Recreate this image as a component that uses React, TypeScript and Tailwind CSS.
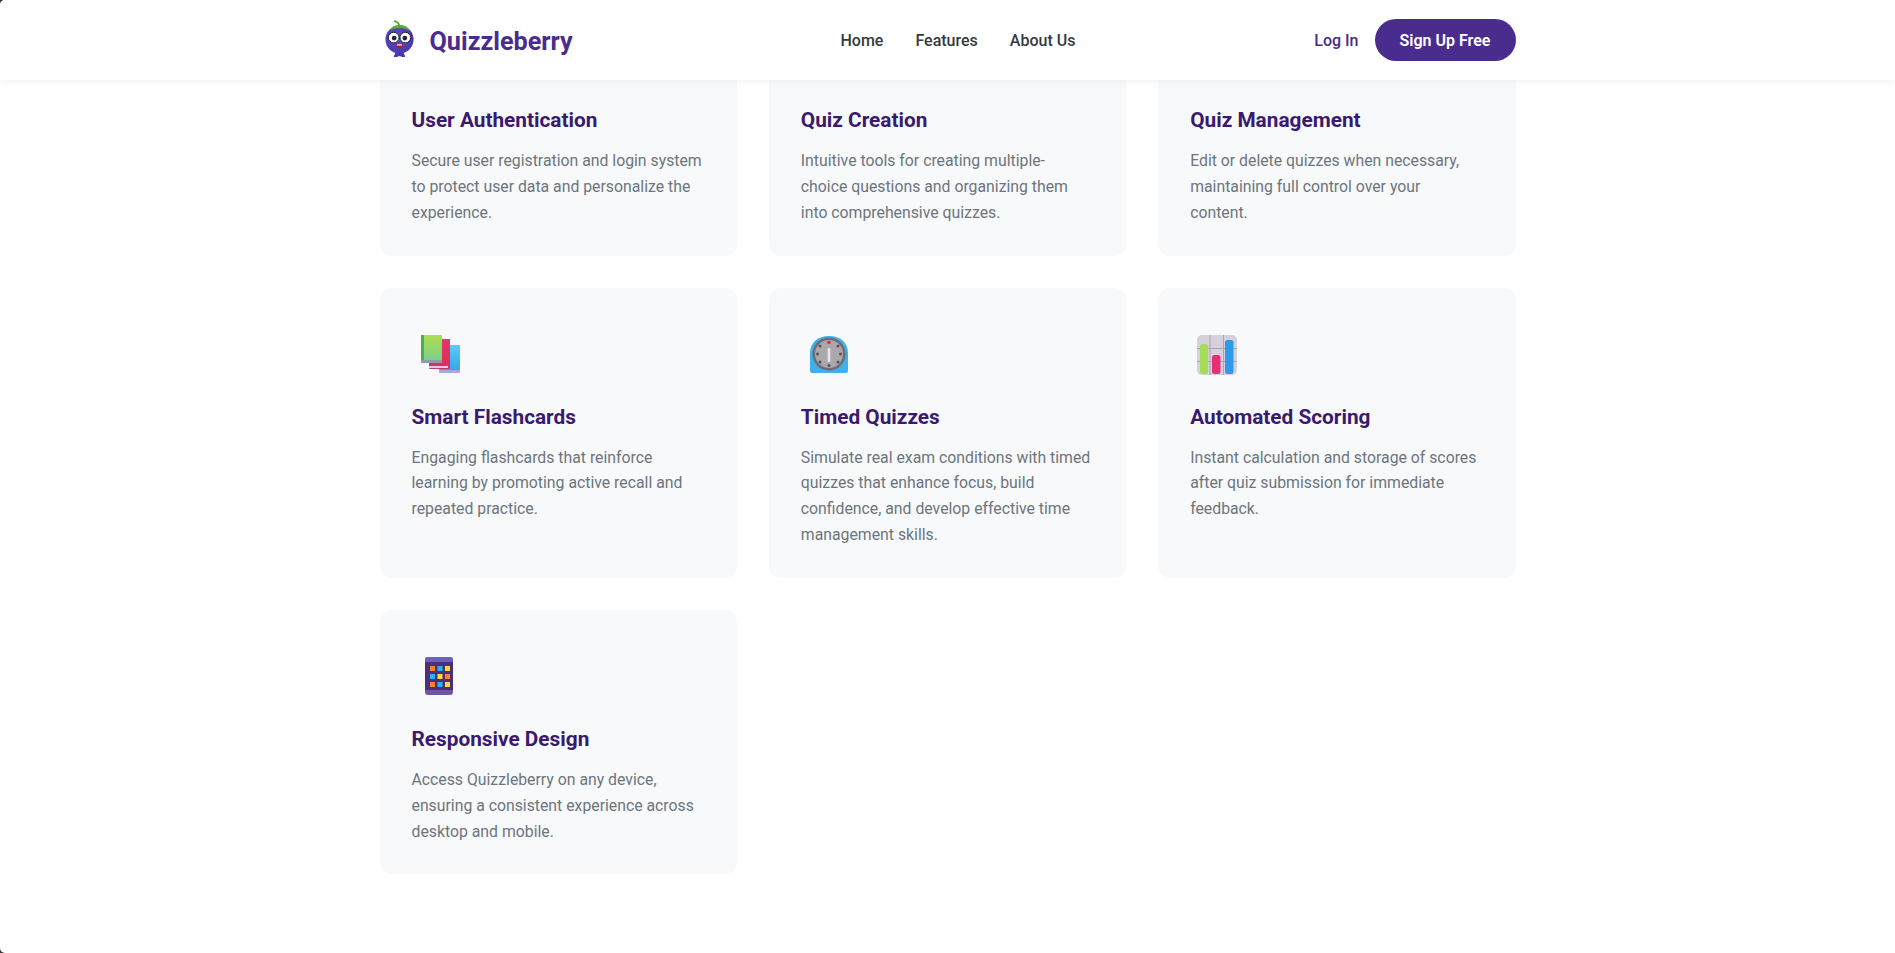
import type { ReactNode } from "react";

const sans = "font-['Roboto','Open_Sans',sans-serif]";

function BerryLogo() {
  return (
    <svg width="31" height="39" viewBox="0 0 32 40" className="shrink-0">
      <defs>
        <radialGradient id="berry" cx="0.42" cy="0.42" r="0.7">
          <stop offset="0" stopColor="#5f50c4" />
          <stop offset="1" stopColor="#4336a6" />
        </radialGradient>
      </defs>
      <path d="M12 33l-2 5h3l3-1 3 1h3l-2-5z" fill="#4538a8" />
      <circle cx="16" cy="20" r="14.5" fill="url(#berry)" />
      <path d="M5.500 11c3-5 7-6 10.500-6s8 1 10.500 6c-3-2-7-2.500-10.500-2.500S9 9 5.500 11z" fill="#5cab36" />
      <path d="M16 7c0-3-2-5-5-6" fill="none" stroke="#5cab36" strokeWidth="1.800" strokeLinecap="round" />
      <circle cx="10" cy="18" r="5.500" fill="#fff" stroke="#1d1a33" strokeWidth="1" />
      <circle cx="22" cy="18" r="5.500" fill="#fff" stroke="#1d1a33" strokeWidth="1" />
      <circle cx="10.500" cy="18.500" r="2.500" fill="#26233a" />
      <circle cx="21.500" cy="18.500" r="2.500" fill="#26233a" />
      <path d="M12.500 25h7c0 3.500-1.500 4.500-3.500 4.500s-3.500-1-3.500-4.500z" fill="#a81f3c" />
      <rect x="13.500" y="25" width="5" height="1.200" fill="#fff" />
    </svg>
  );
}

function BooksIcon() {
  return (
    <svg width="40" height="40" viewBox="0 0 40 40" className="mt-[1px]">
      <defs>
        <linearGradient id="b1" x1="0" y1="0" x2="0" y2="1"><stop offset="0" stopColor="#a9e04f" /><stop offset="1" stopColor="#7ed08a" /></linearGradient>
        <linearGradient id="b2" x1="0" y1="0" x2="0" y2="1"><stop offset="0" stopColor="#e8336f" /><stop offset="1" stopColor="#dc2f5c" /></linearGradient>
        <linearGradient id="b3" x1="0" y1="0" x2="0" y2="1"><stop offset="0" stopColor="#58cdf7" /><stop offset="1" stopColor="#38a5e8" /></linearGradient>
      </defs>
      <rect x="18" y="10" width="21" height="28" rx="1" fill="#a9a7e0" />
      <rect x="18" y="10" width="21" height="25" rx="1" fill="url(#b3)" />
      <rect x="8" y="4" width="21" height="30" rx="1" fill="#bb3a78" />
      <rect x="8" y="31" width="19" height="2" fill="#e4c9e6" />
      <rect x="8" y="4" width="21" height="26" rx="1" fill="url(#b2)" />
      <rect x="0" y="0" width="21" height="28" rx="1" fill="#8e9bb0" />
      <rect x="0" y="0" width="21" height="25" rx="1" fill="url(#b1)" />
      <rect x="0" y="0" width="3" height="25" fill="#4eab55" />
    </svg>
  );
}

function TimerIcon() {
  return (
    <svg width="40" height="40" viewBox="0 0 40 40" className="-ml-[1px]">
      <path d="M1 36V18C1 7.500 9 1 20 1s19 6.500 19 17v18c0 1-1 2-2 2H3c-1 0-2-1-2-2z" fill="#3fb0e8" />
      <circle cx="20" cy="19" r="16.500" fill="#6d6d73" />
      <circle cx="20" cy="19" r="14" fill="#aca7ad" />
      <circle cx="20" cy="7.500" r="1.800" fill="#e5285f" />
      {[[29, 11], [31.500, 19], [29, 27], [20, 30.500], [11, 27], [8.500, 19], [11, 11]].map(([x, y]) => (
        <circle key={`${x}-${y}`} cx={x} cy={y} r="1.500" fill="#55525a" />
      ))}
      <rect x="18.700" y="13" width="2.600" height="14" rx="1.300" fill="#e8e6ea" />
    </svg>
  );
}

function ChartIcon() {
  return (
    <svg width="40" height="40" viewBox="0 0 40 40" className="-ml-[2px]">
      <rect x="0" y="0" width="40" height="40" rx="5" fill="#d5d0dc" />
      <path d="M13 0v40M26.500 0v40M0 13.500h40M0 26.500h40" stroke="#a9a5b0" strokeWidth="1" />
      <rect x="3" y="9" width="8" height="30" rx="2.500" fill="#a2dd56" />
      <rect x="15" y="20" width="8.500" height="19" rx="2.500" fill="#e52f76" />
      <rect x="28" y="5" width="8.500" height="34" rx="2.500" fill="#2e9be8" />
    </svg>
  );
}

function TabletIcon() {
  const cells = ["#f9822b", "#22b4f5", "#fbd93d", "#22b4f5", "#fbd93d", "#f9822b", "#f9822b", "#22b4f5", "#fbd93d"];
  return (
    <svg width="40" height="40" viewBox="0 0 40 40" className="-ml-[2px]">
      <rect x="6" y="0" width="28" height="38" rx="3" fill="#6f55a8" />
      <rect x="6" y="0" width="28" height="5" rx="2.500" fill="#6a63bc" />
      <rect x="6" y="5" width="28" height="28" fill="#4d2f79" />
      {cells.map((fill, i) => (
        <rect key={i} x={11 + (i % 3) * 7.500} y={9 + Math.floor(i / 3) * 8} width="5" height="5" fill={fill} />
      ))}
    </svg>
  );
}

function FeatureCard({ icon, title, children }: { icon?: ReactNode; title: string; children: ReactNode }) {
  return (
    <div className={`bg-[#f8f9fa] px-8 ${icon ? "rounded-xl pt-8 pb-[30px]" : "rounded-b-xl pt-[26px] pb-[30px]"}`}>
      {icon && <div className="h-[40px] mt-[15px] ml-[9px] mb-[28px]">{icon}</div>}
      <h3 className="text-[20.8px] leading-[28px] font-bold text-[#3a1a6e]">{title}</h3>
      <p className="mt-[14px] text-[15.8px] leading-[25.84px] text-[#6c757d]">{children}</p>
    </div>
  );
}

export default function App() {
  return (
    <div className="bg-[#3a3a3a]">
      <div className={`min-h-screen rounded-l-[5px] bg-white ${sans}`}>
        <nav className="relative z-10 h-[80px] rounded-tl-[5px] bg-white shadow-[0_2px_10px_rgba(0,0,0,0.05)]">
          <div className="mx-auto flex h-full w-[1136px] items-center">
            <div className="flex w-[461px] items-center gap-[15px]">
              <div className="ml-[4px]"><BerryLogo /></div>
              <span className="pt-[3px] text-[25.2px] font-bold text-[#4a2c8f]">Quizzleberry</span>
            </div>
            <div className="flex items-center gap-[32px] pt-[1px] text-[16px] font-medium text-[#343a40]">
              <span>Home</span>
              <span>Features</span>
              <span>About Us</span>
            </div>
            <div className="flex flex-1 items-center justify-end gap-[16px] text-[16px] font-medium">
              <span className="pt-[1px] text-[#4a2c8f]">Log In</span>
              <span className="flex h-[42px] w-[141px] items-center justify-center rounded-full bg-[#4a2c8f] pt-[1px] font-semibold text-white">Sign Up Free</span>
            </div>
          </div>
        </nav>
        <main className="mx-auto grid w-[1136px] grid-cols-3 gap-8">
          <FeatureCard title="User Authentication">Secure user registration and login system<br />to protect user data and personalize the<br />experience.</FeatureCard>
          <FeatureCard title="Quiz Creation">Intuitive tools for creating multiple-<br />choice questions and organizing them<br />into comprehensive quizzes.</FeatureCard>
          <FeatureCard title="Quiz Management">Edit or delete quizzes when necessary,<br />maintaining full control over your<br />content.</FeatureCard>
          <FeatureCard icon={<BooksIcon />} title="Smart Flashcards">Engaging flashcards that reinforce<br />learning by promoting active recall and<br />repeated practice.</FeatureCard>
          <FeatureCard icon={<TimerIcon />} title="Timed Quizzes">Simulate real exam conditions with timed<br />quizzes that enhance focus, build<br />confidence, and develop effective time<br />management skills.</FeatureCard>
          <FeatureCard icon={<ChartIcon />} title="Automated Scoring">Instant calculation and storage of scores<br />after quiz submission for immediate<br />feedback.</FeatureCard>
          <FeatureCard icon={<TabletIcon />} title="Responsive Design">Access Quizzleberry on any device,<br />ensuring a consistent experience across<br />desktop and mobile.</FeatureCard>
        </main>
      </div>
    </div>
  );
}
